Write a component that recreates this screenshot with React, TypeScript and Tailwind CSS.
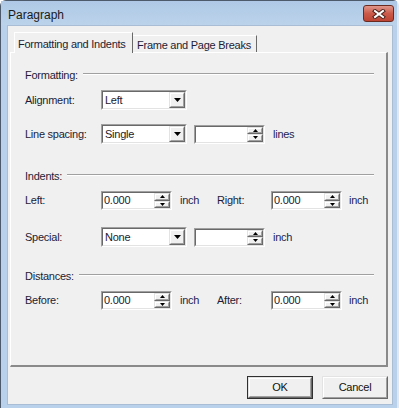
import React from "react";

const font = { fontFamily: '"Liberation Sans", Arial, sans-serif' };

function Sunken({ className, children }: { className: string; children?: React.ReactNode }) {
  return (
    <div className={`border border-t-[#a0a0a0] border-l-[#a0a0a0] border-b-white border-r-white ${className}`}>
      <div className="h-full w-full border border-t-[#696969] border-l-[#696969] border-b-[#e3e3e3] border-r-[#e3e3e3] bg-white flex">
        {children}
      </div>
    </div>
  );
}

function Raised({ className, children }: { className: string; children?: React.ReactNode }) {
  return (
    <div className={`border border-t-[#e3e3e3] border-l-[#e3e3e3] border-b-[#696969] border-r-[#696969] bg-[#f0f0f0] ${className}`}>
      <div className="h-full w-full border border-t-white border-l-white border-b-[#a0a0a0] border-r-[#a0a0a0] flex items-center justify-center">
        {children}
      </div>
    </div>
  );
}

function Select({ value }: { value: string }) {
  return (
    <Sunken className="w-[86px] h-[20px]">
      <span className="flex-1 pl-[2px] leading-[16px] text-[#1a1a2e]">{value}</span>
      <Raised className="w-[16px] h-full">
        <svg width="7" height="4" viewBox="0 0 7 4">
          <polygon points="0,0 7,0 3.5,4" fill="#000" />
        </svg>
      </Raised>
    </Sunken>
  );
}

function Spin({ value = "" }: { value?: string }) {
  return (
    <Sunken className="w-[71px] h-[19px]">
      <span className="flex-1 pl-[1px] leading-[15px] text-[#1a1a2e]">{value}</span>
      <div className="w-[16px] h-full flex flex-col">
        <Raised className="w-full flex-1">
          <svg width="5" height="3" viewBox="0 0 5 3">
            <polygon points="2.5,0 5,3 0,3" fill="#000" />
          </svg>
        </Raised>
        <Raised className="w-full flex-1">
          <svg width="5" height="3" viewBox="0 0 5 3">
            <polygon points="0,0 5,0 2.5,3" fill="#000" />
          </svg>
        </Raised>
      </div>
    </Sunken>
  );
}

function Group({ title, className }: { title: string; className: string }) {
  return (
    <div className={`flex items-center h-[14px] ${className}`}>
      <span>{title}</span>
      <div className="flex-1 ml-[5px] mb-[3px] h-[2px] border-t border-t-[#a0a0a0] border-b border-b-white" />
    </div>
  );
}

function Label({ children, w = "w-[76px]" }: { children: React.ReactNode; w?: string }) {
  return <span className={`${w} shrink-0`}>{children}</span>;
}

export default function App() {
  return (
    <div
      className="w-[399px] h-[408px] flex flex-col bg-[#b9d1ea] border-t border-l border-[#4d5a6b] rounded-tl-[6px] rounded-tr-[6px] border-r-2 border-r-[#dfe9f5] text-[11px] tracking-[-0.25px] text-[#1c1c36]"
      style={font}
    >
      {/* Title bar */}
      <div className="h-[24px] flex items-start pl-[7px] pr-[3px] bg-gradient-to-b from-[#aec8e5] to-[#bcd3eb]">
        <span className="mt-[5px] text-[12px] tracking-[0px] text-[#1a1a1a]">Paragraph</span>
        <div className="ml-auto mt-[4px] w-[31px] h-[17px] rounded-[3px] border border-[#6a2a20] bg-gradient-to-b from-[#e0958a] via-[#cb5a4a] to-[#bd4434] flex items-center justify-center">
          <svg width="14" height="10" viewBox="0 0 14 10">
            <path d="M3 2 L11 8 M11 2 L3 8" stroke="#4a211a" strokeWidth="4" strokeLinecap="square" />
            <path d="M3 2 L11 8 M11 2 L3 8" stroke="#fff" strokeWidth="2" strokeLinecap="square" />
          </svg>
        </div>
      </div>

      {/* Client area */}
      <div className="flex-1 flex pl-[6px] pr-[4px] pb-[3px]">
        <div className="flex-1 border border-[#a9bdd4] bg-[#f0f0f0] flex flex-col pt-[6px] pl-[2px] pr-[4px]">
          {/* Tabs */}
          <div className="flex items-end h-[20px] ml-[4px]">
            <div className="relative z-10 h-[21px] mb-[-1px] w-[119px] bg-[#f0f0f0] border-t border-l border-white border-r border-r-[#696969] flex items-start pl-[3px] pt-[3px]">
              Formatting and Indents
            </div>
            <div className="h-[17px] w-[124px] border-t border-white border-r border-r-[#696969] flex items-start pl-[4px] pt-[1px]">
              Frame and Page Breaks
            </div>
          </div>

          {/* Panel */}
          <div className="w-[378px] h-[315px] border-t border-l border-white border-r-2 border-b-2 border-r-[#8a8a8a] border-b-[#8a8a8a] flex flex-col pl-[14px] pr-[12px]">
            <Group title="Formatting:" className="mt-[15px]" />
            <div className="flex items-center mt-[8px]">
              <Label>Alignment:</Label>
              <Select value="Left" />
            </div>
            <div className="flex items-center mt-[14px]">
              <Label>Line spacing:</Label>
              <Select value="Single" />
              <div className="ml-[7px]"><Spin /></div>
              <span className="ml-[8px] text-[#1e1e52]">lines</span>
            </div>

            <Group title="Indents:" className="mt-[25px]" />
            <div className="flex items-center mt-[8px]">
              <Label>Left:</Label>
              <Spin value="0.000" />
              <span className="ml-[8px] w-[37px] text-[#1e1e52]">inch</span>
              <Label w="w-[54px]">Right:</Label>
              <Spin value="0.000" />
              <span className="ml-[7px] text-[#1e1e52]">inch</span>
            </div>
            <div className="flex items-center mt-[17px]">
              <Label>Special:</Label>
              <Select value="None" />
              <div className="ml-[7px]"><Spin /></div>
              <span className="ml-[8px] text-[#1e1e52]">inch</span>
            </div>

            <Group title="Distances:" className="mt-[22px]" />
            <div className="flex items-center mt-[8px]">
              <Label>Before:</Label>
              <Spin value="0.000" />
              <span className="ml-[8px] w-[37px] text-[#1e1e52]">inch</span>
              <Label w="w-[54px]">After:</Label>
              <Spin value="0.000" />
              <span className="ml-[7px] text-[#1e1e52]">inch</span>
            </div>
          </div>

          {/* Buttons */}
          <div className="flex justify-end gap-[9px] mt-[9px]">
            <div className="w-[66px] h-[23px] border border-[#303030]">
              <Raised className="w-full h-full">
                <span className="text-[#111]">OK</span>
              </Raised>
            </div>
            <Raised className="w-[66px] h-[23px]">
              <span className="text-[#111]">Cancel</span>
            </Raised>
          </div>
        </div>
      </div>
    </div>
  );
}
